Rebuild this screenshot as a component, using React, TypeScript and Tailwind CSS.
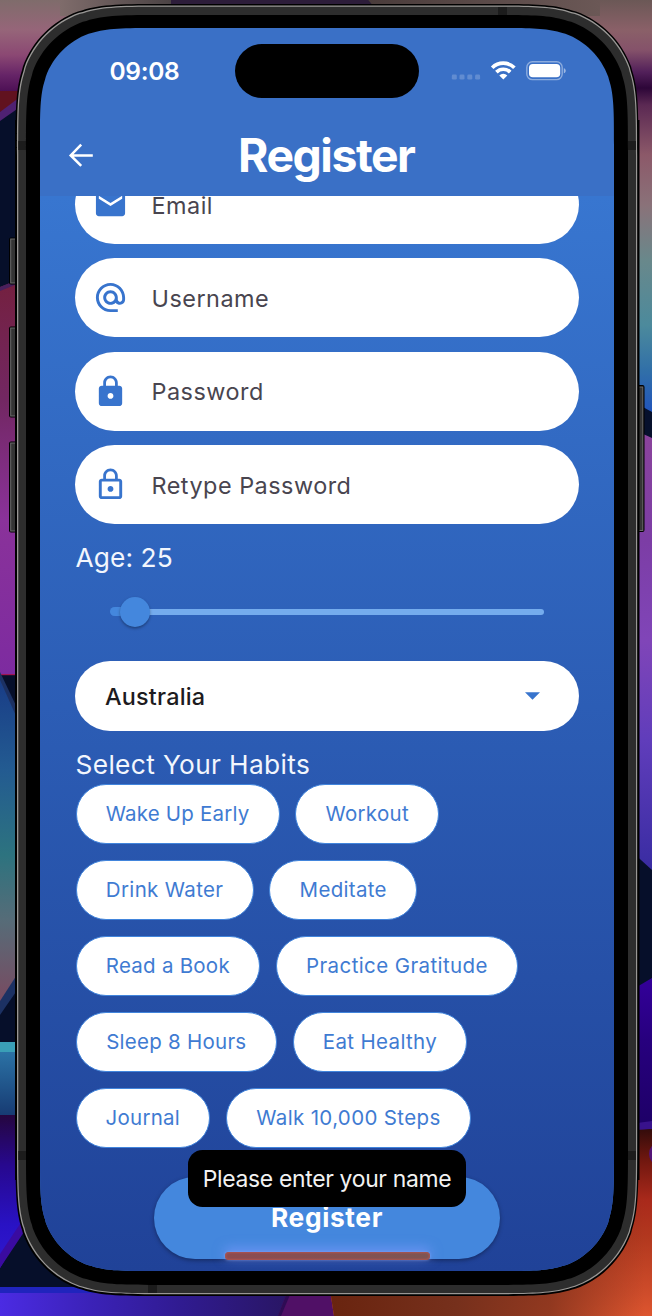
import React from "react";
import { MdAlternateEmail, MdEmail, MdLock, MdLockOutline } from "react-icons/md";

// Rounded rectangle with continuous ("squircle") corners.
function squircle(x0: number, y0: number, x1: number, y1: number, r: number) {
  const a = 1.528665 * r;
  const b = 1.088493 * r;
  const c = 0.868407 * r;
  const h = 0.669934 * r;
  const i = 0.065496 * r;
  const d = 0.631494 * r;
  const e = 0.074911 * r;
  const f = 0.372824 * r;
  const g = 0.16906 * r;
  return [
    `M${x0 + a} ${y0}H${x1 - a}`,
    `C${x1 - b} ${y0} ${x1 - c} ${y0} ${x1 - h} ${y0 + i}L${x1 - d} ${y0 + e}`,
    `C${x1 - f} ${y0 + g} ${x1 - g} ${y0 + f} ${x1 - e} ${y0 + d}L${x1 - i} ${y0 + h}`,
    `C${x1} ${y0 + c} ${x1} ${y0 + b} ${x1} ${y0 + a}V${y1 - a}`,
    `C${x1} ${y1 - b} ${x1} ${y1 - c} ${x1 - i} ${y1 - h}L${x1 - e} ${y1 - d}`,
    `C${x1 - g} ${y1 - f} ${x1 - f} ${y1 - g} ${x1 - d} ${y1 - e}L${x1 - h} ${y1 - i}`,
    `C${x1 - c} ${y1} ${x1 - b} ${y1} ${x1 - a} ${y1}H${x0 + a}`,
    `C${x0 + b} ${y1} ${x0 + c} ${y1} ${x0 + h} ${y1 - i}L${x0 + d} ${y1 - e}`,
    `C${x0 + f} ${y1 - g} ${x0 + g} ${y1 - f} ${x0 + e} ${y1 - d}L${x0 + i} ${y1 - h}`,
    `C${x0} ${y1 - c} ${x0} ${y1 - b} ${x0} ${y1 - a}V${y0 + a}`,
    `C${x0} ${y0 + b} ${x0} ${y0 + c} ${x0 + i} ${y0 + h}L${x0 + e} ${y0 + d}`,
    `C${x0 + g} ${y0 + f} ${x0 + f} ${y0 + g} ${x0 + d} ${y0 + e}L${x0 + h} ${y0 + i}`,
    `C${x0 + c} ${y0} ${x0 + b} ${y0} ${x0 + a} ${y0}Z`,
  ].join("");
}

type Stop = [number, string];

function Fade({ id, from, to, stops, across }: { id: string; from: number; to: number; stops: Stop[]; across?: boolean }) {
  return (
    <linearGradient id={id} gradientUnits="userSpaceOnUse" x1={across ? from : 0} x2={across ? to : 0} y1={across ? 0 : from} y2={across ? 0 : to}>
      {stops.map(([at, color]) => (
        <stop key={at} offset={(at - from) / (to - from)} stopColor={color} />
      ))}
    </linearGradient>
  );
}

function Wallpaper() {
  return (
    <svg className="absolute inset-0" width="652" height="1316" viewBox="0 0 652 1316" aria-hidden="true">
      <defs>
        <Fade id="l1" from={0} to={91} stops={[[0, "#7f6c6b"], [30, "#966579"], [55, "#8b4873"], [75, "#662467"], [91, "#4d1055"]]} />
        <Fade id="l2" from={280} to={675} stops={[[280, "#74203f"], [400, "#722762"], [520, "#8a329a"], [675, "#7d2ba0"]]} />
        <Fade id="l3" from={672} to={1015} stops={[[672, "#183a86"], [770, "#235b91"], [855, "#2d737f"], [920, "#566c78"], [1000, "#784b61"]]} />
        <Fade id="l4" from={1052} to={1115} stops={[[1052, "#2b72a5"], [1115, "#173b73"]]} />
        <Fade id="l5" from={1115} to={1268} stops={[[1115, "#25063f"], [1165, "#27088e"], [1225, "#2912c4"], [1268, "#3018d0"]]} />
        <Fade id="b1" across from={0} to={285} stops={[[0, "#4b2be3"], [90, "#3b22b8"], [180, "#301b91"], [285, "#291665"]]} />
        <Fade id="r1" from={0} to={440} stops={[[0, "#6b5856"], [30, "#8a6068"], [50, "#85526a"], [72, "#52205a"], [88, "#2d0638"], [105, "#5b2953"], [155, "#8c5969"], [205, "#8a7279"], [260, "#69888b"], [325, "#4c8a9c"], [370, "#3170a8"], [410, "#2256ba"]]} />
        <Fade id="r2" from={430} to={870} stops={[[430, "#8b439b"], [540, "#7c3da5"], [640, "#8045b8"], [740, "#603dbb"], [870, "#392ca2"]]} />
        <Fade id="r3" from={980} to={1122} stops={[[980, "#330099"], [1040, "#27007e"], [1122, "#1e0068"]]} />
        <Fade id="r4" from={1130} to={1316} stops={[[1130, "#350c0b"], [1160, "#70170f"], [1200, "#a9291b"], [1240, "#b3391f"], [1290, "#cd4b2a"], [1316, "#dd552f"]]} />
        <Fade id="t1" across from={60} to={171} stops={[[60, "#7f6c6b"], [171, "#4b4344"]]} />
        <Fade id="t2" across from={370} to={600} stops={[[370, "#4a3c3b"], [600, "#6b5856"]]} />
        <linearGradient id="shade" gradientUnits="userSpaceOnUse" x1="330" x2="645" y1="0" y2="0">
          <stop offset="0" stopColor="#69240f" />
          <stop offset="0.4" stopColor="#76301c" />
          <stop offset="0.7" stopColor="#80321c" stopOpacity="0.8" />
          <stop offset="1" stopColor="#80321c" stopOpacity="0" />
        </linearGradient>
      </defs>
      <rect width="652" height="1316" fill="#060f2a" />
      <rect width="160" height="91" fill="url(#l1)" />
      <path d="M60 0H171V16H60Z" fill="url(#t1)" />
      <path d="M171 0H368L382 16H171Z" fill="#2d1d3a" />
      <path d="M0 91H20V105L0 112Z" fill="#61121f" />
      <path d="M0 112L20 97V107L0 121Z" fill="#4f2172" />
      <path d="M0 287L20 279V675H0Z" fill="url(#l2)" />
      <path d="M0 287L20 279V283L0 291Z" fill="#48205d" />
      <rect y="674" width="20" height="1.2" fill="#a01452" />
      <path d="M0 672L20 714V986L0 1015Z" fill="#1c3163" />
      <path d="M0 680L20 725V970L0 1001Z" fill="url(#l3)" />
      <rect y="1042" width="20" height="10" fill="#3a9fb7" />
      <rect y="1052" width="20" height="63" fill="url(#l4)" />
      <path d="M0 1115H24V1228L0 1268Z" fill="url(#l5)" />
      <path d="M0 1254L24 1218V1232L0 1268Z" fill="#3a0ba0" />
      <rect y="1287" width="300" height="6" fill="#2024bd" />
      <rect y="1293" width="300" height="23" fill="url(#b1)" />
      <path d="M288 1290H330L335 1316H278Z" fill="#501066" />
      <path d="M288 1290H292L281 1316H278Z" fill="#2e0c54" />
      <path d="M520 0H652V440H520Z" fill="url(#r1)" />
      <path d="M368 0H600V16H382Z" fill="url(#t2)" />
      <path d="M630 400L652 412V440L630 428Z" fill="#06102c" />
      <path d="M630 428L652 438V870L630 850Z" fill="url(#r2)" />
      <path d="M630 991L652 978V1126H630Z" fill="url(#r3)" />
      <path d="M630 1124L652 1121V1129L630 1132Z" fill="#38128c" />
      <path d="M620 1131L652 1129V1316H334L330 1290H540Z" fill="url(#r4)" />
      <path d="M540 1200H652V1316H334L330 1290H540Z" fill="url(#shade)" />
      <circle cx="662" cy="1154" r="13" fill="#541477" />
    </svg>
  );
}

function DeviceFrame() {
  const keys = [
    { x: 9.5, y: 237.5, h: 47 },
    { x: 9.5, y: 326.5, h: 91 },
    { x: 9.5, y: 441.5, h: 91 },
  ];
  return (
    <svg className="absolute inset-0" width="652" height="1316" viewBox="0 0 652 1316" aria-hidden="true">
      {keys.map((k) => (
        <g key={k.y}>
          <rect x={k.x - 0.5} y={k.y} width="14" height={k.h} rx="2" fill="#000" />
          <rect x={k.x + 1.2} y={k.y + 1.5} width="12" height={k.h - 3} fill="#353535" stroke="#6b6b6b" strokeWidth="1" />
        </g>
      ))}
      <rect x="630" y="385" width="14.5" height="147" rx="2" fill="#000" />
      <rect x="630" y="387" width="12.8" height="143.5" fill="#353535" stroke="#6b6b6b" strokeWidth="1" />
      <rect x="15" y="120" width="624.5" height="1060" fill="#000" />
      <path d={squircle(15.5, 4, 638.5, 1296, 99)} fill="#000" />
      <path d={squircle(17, 5.5, 637.2, 1294.2, 98)} fill="#999795" />
      <path d={squircle(18.3, 6.8, 636, 1293, 97)} fill="#2d2d2d" />
      <g fill="#1c1c1c">
        <rect x="18.3" y="141" width="8" height="9" />
        <rect x="628" y="141" width="8" height="9" />
        <rect x="498" y="7" width="9" height="9" />
        <rect x="18.3" y="1151" width="8" height="9" />
        <rect x="628" y="1151" width="8" height="9" />
        <rect x="148" y="1284" width="9" height="9" />
      </g>
      <path d={squircle(26, 15, 628, 1285, 90)} fill="#000" />
    </svg>
  );
}

function StatusIcons() {
  return (
    <svg className="absolute left-[410px] top-[30px]" width="118" height="26" viewBox="0 0 118 26" aria-hidden="true">
      <g fill="#fff" fillOpacity="0.2">
        <rect x="1.8" y="16.6" width="5" height="5" rx="1.3" />
        <rect x="9.5" y="16.6" width="5" height="5" rx="1.3" />
        <rect x="17.3" y="16.6" width="5" height="5" rx="1.3" />
        <rect x="25.1" y="16.6" width="5" height="5" rx="1.3" />
      </g>
      <g fill="none" stroke="#fff" strokeWidth="3.7">
        <path d="M42.2 9.7A15.8 15.8 0 0 1 64.4 9.7" />
        <path d="M46.4 14.1A9.8 9.8 0 0 1 60.2 14.1" />
      </g>
      <path d="M49.3 17.4A5.7 5.7 0 0 1 57.3 17.4L53.3 21.6Z" fill="#fff" />
      <rect x="76.8" y="3.8" width="35.4" height="17.8" rx="5.6" fill="none" stroke="#fff" strokeOpacity="0.42" strokeWidth="1.4" />
      <rect x="79" y="6" width="31.2" height="13.3" rx="3.8" fill="#fff" />
      <path d="M113.8 10.2C116.4 10.8 116.4 14.6 113.8 15.3Z" fill="#fff" fillOpacity="0.5" />
    </svg>
  );
}

function Field({ icon, label }: { icon: React.ReactNode; label: string }) {
  return (
    <div className="flex h-[79px] items-center rounded-full bg-white pl-[17.5px] text-[#3874cd]">
      {icon}
      <span className="ml-[24px] pt-[2px] text-[23.4px] leading-[28px] tracking-[0.5px] text-[#49454f]">{label}</span>
    </div>
  );
}

const habits = [
  [{ name: "Wake Up Early", box: "w-[204px] tracking-[0.2px]" }, { name: "Workout", box: "w-[144px] tracking-[0.3px]" }],
  [{ name: "Drink Water", box: "w-[178px] tracking-[0.35px]" }, { name: "Meditate", box: "w-[148px] tracking-[0.3px]" }],
  [{ name: "Read a Book", box: "w-[184.5px] tracking-[0.25px]" }, { name: "Practice Gratitude", box: "w-[242.5px] tracking-[0.4px]" }],
  [{ name: "Sleep 8 Hours", box: "w-[201.5px] tracking-[0.25px]" }, { name: "Eat Healthy", box: "w-[174.5px] tracking-[0.35px]" }],
  [{ name: "Journal", box: "w-[134.5px] tracking-[0.25px]" }, { name: "Walk 10,000 Steps", box: "w-[245.5px] tracking-[0.35px]" }],
];

export default function App() {
  return (
    <div className="relative h-[1316px] w-[652px] overflow-hidden bg-black pl-[40px] pt-[28px] font-[Inter,sans-serif]">
      <Wallpaper />
      <DeviceFrame />
      <div
        className="relative flex h-[1243px] w-[574px] flex-col overflow-hidden bg-[#3a70c6]"
        style={{ clipPath: `path("${squircle(0, 0, 574, 1243, 77)}")` }}
      >
        <header className="h-[167.5px] shrink-0 text-white">
          <div className="absolute left-[69.5px] top-[28px] text-[24.5px] font-semibold leading-[30px] tracking-[-0.3px]">09:08</div>
          <div className="absolute left-[195px] top-[16px] h-[54px] w-[183.5px] rounded-full bg-black" />
          <StatusIcons />
          <div className="relative flex h-[90px] translate-y-[82px] items-center justify-center">
            <svg className="absolute left-[28px] top-[29.5px]" width="28" height="28" viewBox="0 0 28 28" fill="none" stroke="#fff" strokeWidth="2.5" aria-hidden="true">
              <path d="M24.8 15.5H3M13.2 4.7L2.7 15.5L13.2 25.9" />
            </svg>
            <h1 className="mr-[1.5px] text-[46.3px] font-bold leading-none tracking-[-1.45px]">Register</h1>
          </div>
        </header>

        <main className="min-h-0 flex-1 overflow-hidden bg-linear-to-b from-[#3876d0] to-[#204298] pl-[35px] pr-[35px]">
          <form className="-mt-[30.5px] flex flex-col">
            <div className="flex flex-col gap-[14.4px]">
              <Field icon={<MdEmail size={35} />} label="Email" />
              <Field icon={<MdAlternateEmail size={35} />} label="Username" />
              <Field icon={<MdLock size={35} />} label="Password" />
              <Field icon={<MdLockOutline size={35} />} label="Retype Password" />
            </div>

            <div className="ml-[0.5px] mt-[17px] text-[26.3px] leading-[34px] tracking-[0.1px] text-[#f2f6fd]">Age: 25</div>

            <div className="ml-[35px] mt-[19.7px] flex h-[34px] w-[434px] items-center">
              <div className="h-[9px] w-[12px] rounded-l-full bg-[#4487dd]" />
              <div className="z-10 -ml-[2px] size-[29.5px] shrink-0 rounded-full bg-[#4487dd] shadow-[0_1.5px_3px_rgba(0,0,0,0.35)]" />
              <div className="-ml-[2px] h-[6px] flex-1 rounded-r-full bg-[#75aced]" />
            </div>

            <div className="mt-[32px] flex h-[70px] items-center justify-between rounded-full bg-white pl-[30px] pr-[39px] text-[23.4px] font-medium tracking-[0.2px] text-[#1d1b20]">
              <span className="relative top-px">Australia</span>
              <svg className="relative top-[0.5px]" width="15" height="8" viewBox="0 0 15 8" aria-hidden="true">
                <path d="M0 0.3H15L7.5 7.8Z" fill="#3874cd" />
              </svg>
            </div>

            <div className="ml-[0.5px] mt-[16.8px] text-[26.3px] leading-[34px] tracking-[0.35px] text-[#f2f6fd]">Select Your Habits</div>

            <div className="mt-[2.5px] flex flex-col gap-[16.2px]">
              {habits.map((row) => (
                <div key={row[0].name} className="ml-[0.6px] flex gap-[15.6px]">
                  {row.map((h) => (
                    <div key={h.name} className={`${h.box} flex h-[59.8px] shrink-0 items-center justify-center whitespace-nowrap rounded-full border-[1.5px] border-[#4285dc] bg-white pt-[1.5px] text-[20.5px] text-[#3f7bd2]`}>
                      {h.name}
                    </div>
                  ))}
                </div>
              ))}
            </div>

            <button type="button" className="ml-[79px] mt-[29.5px] h-[81.5px] w-[346px] shrink-0 rounded-full bg-[#4487dd] text-[26.3px] font-bold tracking-[0.65px] text-white shadow-[0_1.5px_4px_rgba(0,0,0,0.35)]">
              Register
            </button>
          </form>
        </main>

        <div className="absolute left-[185px] top-[1223.5px] h-[8px] w-[204.5px] rounded-full bg-linear-to-r from-[#8c4b50] to-[#7d5553] shadow-[0_-3px_12px_1px_rgba(125,155,255,0.7),0_0_3px_rgba(160,180,255,0.7),inset_0_0_2px_1px_rgba(184,86,80,0.8)]" />
        <div className="absolute left-[148px] top-[1121.5px] flex h-[57.5px] w-[278px] items-center justify-center whitespace-nowrap rounded-[14.5px] bg-black pt-px text-[22.9px] tracking-[-0.31px] text-[#f2f2f2]">
          Please enter your name
        </div>
      </div>
    </div>
  );
}
